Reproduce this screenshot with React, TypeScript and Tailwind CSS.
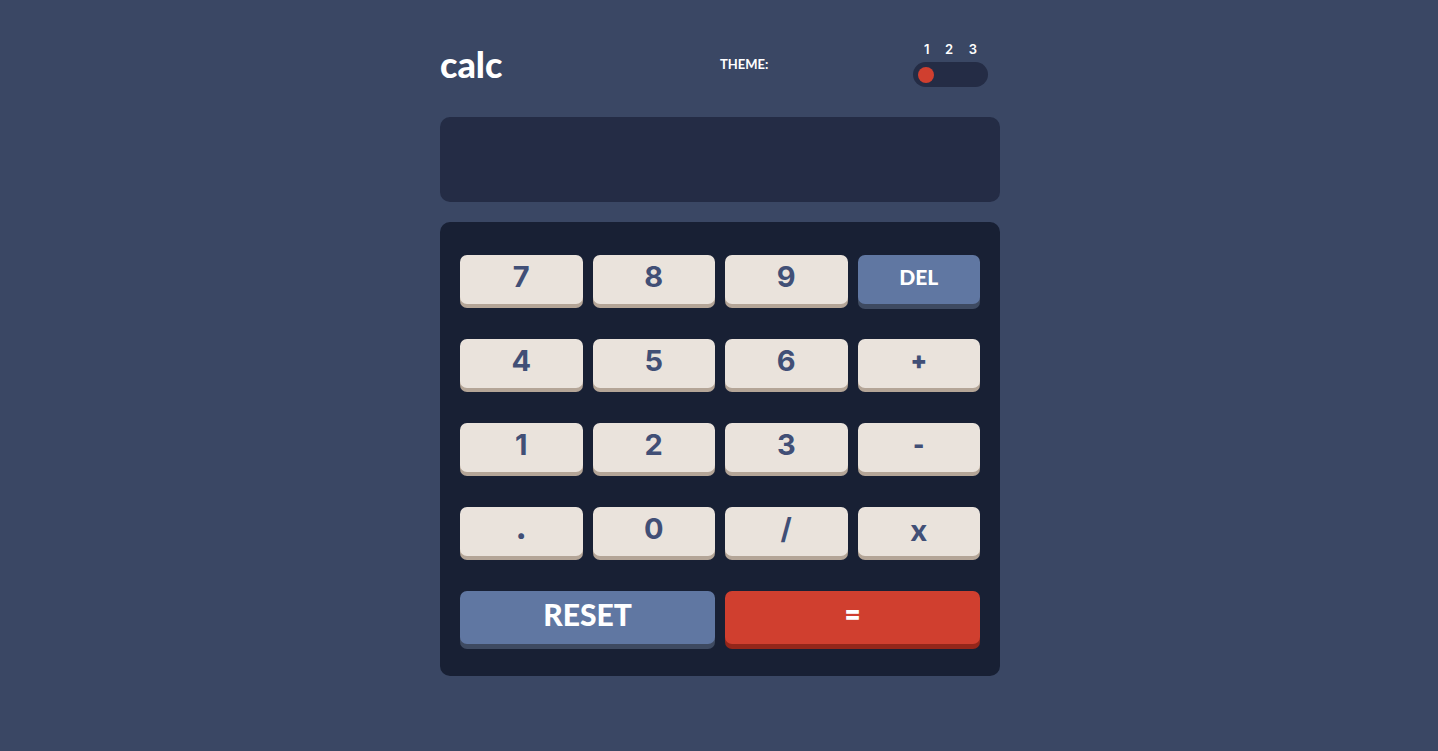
import { useState } from "react";
import clsx from "clsx";

type Tone = "light" | "blue" | "red";
type Key = { label: string; tone?: Tone; wide?: boolean; name?: string };

const KEYS: Key[] = [
  { label: "7" },
  { label: "8" },
  { label: "9" },
  { label: "DEL", tone: "blue", name: "Delete" },
  { label: "4" },
  { label: "5" },
  { label: "6" },
  { label: "+" },
  { label: "1" },
  { label: "2" },
  { label: "3" },
  { label: "-" },
  { label: "." },
  { label: "0" },
  { label: "/" },
  { label: "x" },
  { label: "RESET", tone: "blue", wide: true },
  { label: "=", tone: "red", wide: true, name: "Equals" },
];

const TONES: Record<Tone, string> = {
  light: "bg-[#eae3dc] text-[#414f76] shadow-[0_4px_0_#b4a597]",
  blue: "bg-[#6077a2] text-white shadow-[0_5px_0_#3e4a61]",
  red: "bg-[#d03f2f] text-white shadow-[0_5px_0_#93261a]",
};

const DIGIT_FACE = "font-['Inter',sans-serif] text-[29px] font-bold";

const FACES: Record<string, string> = {
  DEL: "font-['Lato',sans-serif] text-[21px] font-black",
  RESET: "font-['Lato',sans-serif] text-3xl font-black",
  x: "font-['Lato',sans-serif] text-3xl font-black",
  ".": "font-['Inter',sans-serif] text-[29px] font-black",
  "+": "font-['Inter',sans-serif] text-2xl font-black",
  "-": "font-['Inter',sans-serif] text-2xl font-black",
  "=": "font-['Inter',sans-serif] text-2xl font-black",
};

function evaluate(expression: string): string {
  const tokens = expression.match(/\d*\.?\d+|[-+/x]/g);
  if (!tokens) return "";
  const terms: number[] = [];
  let op = "+";
  for (const token of tokens) {
    if (/^[-+/x]$/.test(token)) {
      op = token;
      continue;
    }
    const n = Number(token);
    if (op === "+") terms.push(n);
    else if (op === "-") terms.push(-n);
    else {
      const last = terms.pop() ?? 0;
      terms.push(op === "x" ? last * n : last / n);
    }
  }
  return String(terms.reduce((a, b) => a + b, 0));
}

function Header() {
  const [theme, setTheme] = useState(1);
  return (
    <header className="grid grid-cols-2 items-center">
      <h1 className="font-['Lato',sans-serif] text-4xl font-black leading-10">calc</h1>
      <div className="flex items-center justify-between pr-3">
        <label htmlFor="theme" className="font-['Lato',sans-serif] text-[13px] font-bold leading-4">
          THEME:
        </label>
        <div className="w-[75px]">
          <div className="flex justify-between px-[11px] pb-1 font-['Inter',sans-serif] text-[13px] font-semibold leading-[18px]">
            <span>1</span>
            <span>2</span>
            <span>3</span>
          </div>
          <input
            id="theme"
            type="range"
            min={1}
            max={3}
            value={theme}
            onChange={(e) => setTheme(Number(e.target.value))}
            className="block h-[25px] w-full cursor-pointer appearance-none rounded-full bg-[#242c45] px-[5px] [&::-webkit-slider-thumb]:size-4 [&::-webkit-slider-thumb]:appearance-none [&::-webkit-slider-thumb]:rounded-full [&::-webkit-slider-thumb]:bg-[#d03f2f]"
          />
        </div>
      </div>
    </header>
  );
}

export default function App() {
  const [value, setValue] = useState("");

  const press = (label: string) => {
    if (label === "RESET") setValue("");
    else if (label === "DEL") setValue(value.slice(0, -1));
    else if (label === "=") setValue(evaluate(value));
    else setValue(value + label);
  };

  return (
    <div className="min-h-screen bg-[#3a4764] pb-10 pl-0.5 pt-10 text-white">
      <main className="mx-auto max-w-[560px]">
        <Header />
        <output
          aria-label="Result"
          className="mt-[30px] flex h-[85px] items-center justify-end overflow-hidden rounded-[10px] bg-[#242c45] px-6 font-['Inter',sans-serif] text-4xl font-bold"
        >
          {value}
        </output>
        <section
          aria-label="Keypad"
          className="mt-5 grid grid-cols-4 gap-x-2.5 gap-y-[35px] rounded-[10px] bg-[#182034] px-5 pb-8 pt-[33px]"
        >
          {KEYS.map(({ label, tone = "light", wide, name }) => (
            <button
              key={label}
              type="button"
              aria-label={name}
              onClick={() => press(label)}
              className={clsx(
                "flex cursor-pointer items-center justify-center rounded-[7px]",
                TONES[tone],
                wide ? "col-span-2 h-[53px] pb-2" : "h-[49px] pb-1.5",
                FACES[label] ?? DIGIT_FACE,
              )}
            >
              {label}
            </button>
          ))}
        </section>
      </main>
    </div>
  );
}
